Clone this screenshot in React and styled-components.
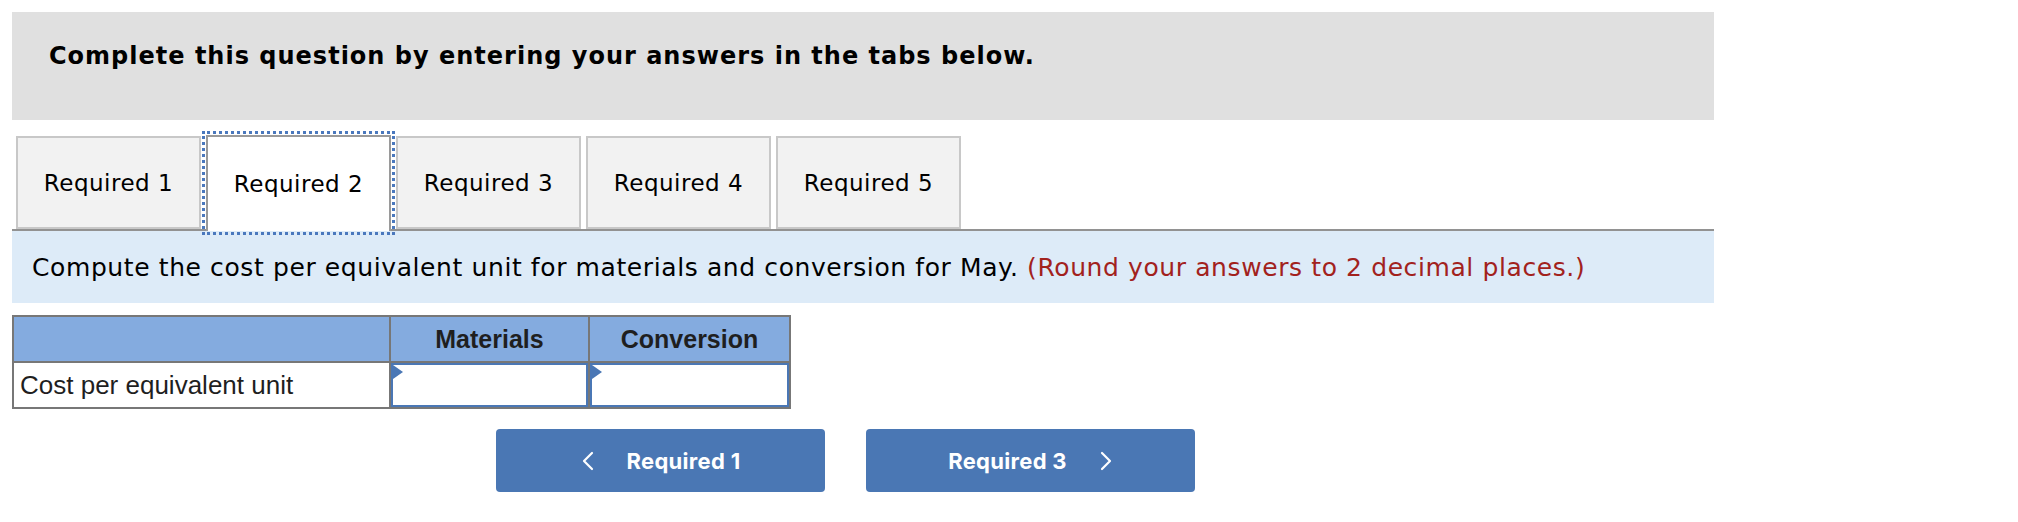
import React from "react";
import styled, { createGlobalStyle } from "styled-components";

const Global = createGlobalStyle`
  html, body { margin: 0; padding: 0; background: #ffffff; }
  body { font-family: "DejaVu Sans", Verdana, sans-serif; color: #000; }
`;

const Page = styled.div`
  padding: 12px;
  width: 1702px;
`;

const Header = styled.div`
  background: #e0e0e0;
  height: 108px;
  box-sizing: border-box;
  padding: 30px 0 0 37px;
`;

const HeaderText = styled.h2`
  margin: 0;
  font-family: "DejaVu Sans", Verdana, sans-serif;
  font-weight: 700;
  font-size: 24px;
  letter-spacing: 1px;
  line-height: 29px;
  color: #000;
`;

const TabRow = styled.div`
  display: flex;
  align-items: flex-end;
  gap: 5px;
  padding: 15px 0 0 4px;
`;

const Tab = styled.button`
  position: relative;
  box-sizing: border-box;
  width: 185px;
  height: ${(p) => (p.$active ? "96px" : "93px")};
  margin-bottom: ${(p) => (p.$active ? "-2px" : "0")};
  z-index: ${(p) => (p.$active ? 1 : 0)};
  background: ${(p) => (p.$active ? "#ffffff" : "#f2f2f2")};
  border: 2px solid ${(p) => (p.$active ? "#9a9a9a" : "#c8c8c8")};
  border-bottom: ${(p) => (p.$active ? "none" : "2px solid #c8c8c8")};
  outline: ${(p) => (p.$active ? "3px dotted #4a78bd" : "none")};
  outline-offset: 1px;
  font-family: "DejaVu Sans", Verdana, sans-serif;
  font-size: 23px;
  letter-spacing: 0.5px;
  color: #000;
  padding: 0;
  cursor: pointer;
`;

const Instructions = styled.div`
  border-top: 2px solid #929292;
  background: #ddebf8;
  height: 72px;
  display: flex;
  align-items: center;
  padding-left: 20px;
  font-size: 25px;
  letter-spacing: 0.6px;
`;

const Red = styled.span`
  color: #a2221d;
`;

const Grid = styled.table`
  margin-top: 12px;
  border-collapse: collapse;
  width: 777px;
  table-layout: fixed;
  font-family: "Liberation Sans", Arial, sans-serif;
  font-size: 25px;
`;

const Col = styled.col`
  width: ${(p) => p.$w}px;
`;

const HeadCell = styled.th`
  background: #84abdf;
  border: 2px solid #777777;
  height: 44px;
  padding: 0;
  font-weight: 700;
  color: #1f1f1f;
  text-align: center;
`;

const LabelCell = styled.td`
  border: 2px solid #777777;
  height: 44px;
  padding: 0 0 0 6px;
  font-size: 26px;
  color: #1f1f1f;
  text-align: left;
`;

const InputCell = styled.td`
  border: 2px solid #777777;
  padding: 0;
  height: 44px;
`;

const InputBox = styled.div`
  position: relative;
  box-sizing: border-box;
  height: 44px;
  border: 2px solid #4a77b5;
  background: #fff;
`;

const Flag = styled.span`
  position: absolute;
  left: 0;
  top: 0;
  width: 0;
  height: 0;
  border-top: 7px solid transparent;
  border-bottom: 7px solid transparent;
  border-left: 10px solid #4a77b5;
`;

const NavRow = styled.div`
  display: flex;
  gap: 41px;
  padding: 20px 0 0 484px;
`;

const NavButton = styled.button`
  width: 329px;
  height: 63px;
  border: none;
  border-radius: 4px;
  background: #4a77b4;
  color: #ffffff;
  display: flex;
  align-items: center;
  justify-content: center;
  gap: 32px;
  font-family: Inter, Roboto, "Liberation Sans", sans-serif;
  font-weight: 700;
  font-size: 22px;
  letter-spacing: 0.3px;
  cursor: pointer;
  padding: 0;
`;

const Chevron = ({ dir }) => (
  <svg width="14" height="20" viewBox="0 0 14 20" fill="none">
    <path
      d={dir === "left" ? "M11 2 L3 10 L11 18" : "M3 2 L11 10 L3 18"}
      stroke="#ffffff"
      strokeWidth="2.2"
      strokeLinecap="round"
      strokeLinejoin="round"
    />
  </svg>
);

const tabs = ["Required 1", "Required 2", "Required 3", "Required 4", "Required 5"];

export default function App() {
  return (
    <Page>
      <Global />
      <Header>
        <HeaderText>Complete this question by entering your answers in the tabs below.</HeaderText>
      </Header>
      <TabRow>
        {tabs.map((t, i) => (
          <Tab key={t} $active={i === 1}>
            {t}
          </Tab>
        ))}
      </TabRow>
      <Instructions>
        <span>
          Compute the cost per equivalent unit for materials and conversion for May.{" "}
          <Red>(Round your answers to 2 decimal places.)</Red>
        </span>
      </Instructions>
      <Grid>
        <colgroup>
          <Col $w={377} />
          <Col $w={199} />
          <Col $w={201} />
        </colgroup>
        <thead>
          <tr>
            <HeadCell />
            <HeadCell>Materials</HeadCell>
            <HeadCell>Conversion</HeadCell>
          </tr>
        </thead>
        <tbody>
          <tr>
            <LabelCell>Cost per equivalent unit</LabelCell>
            <InputCell>
              <InputBox>
                <Flag />
              </InputBox>
            </InputCell>
            <InputCell>
              <InputBox>
                <Flag />
              </InputBox>
            </InputCell>
          </tr>
        </tbody>
      </Grid>
      <NavRow>
        <NavButton>
          <Chevron dir="left" />
          <span>Required 1</span>
        </NavButton>
        <NavButton>
          <span>Required 3</span>
          <Chevron dir="right" />
        </NavButton>
      </NavRow>
    </Page>
  );
}
